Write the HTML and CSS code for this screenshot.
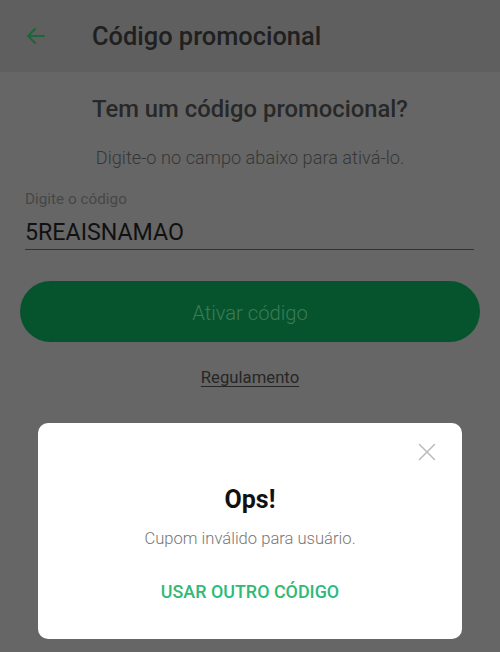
FILE: index.html
```html
<!DOCTYPE html>
<html lang="pt-BR">
<head>
<meta charset="utf-8">
<title>Código promocional</title>
<link rel="stylesheet" href="styles.css">
</head>
<body>
<div class="screen">
  <header class="topbar">
    <button class="back" aria-label="Voltar">
      <svg width="24" height="24" viewBox="0 0 24 24"><path d="M20 12H4.5M11 5l-7 7 7 7" fill="none" stroke="#1b673a" stroke-width="2" stroke-linecap="round" stroke-linejoin="round"/></svg>
    </button>
    <h1 class="title">Código promocional</h1>
  </header>
  <main class="content">
    <h2 class="heading">Tem um código promocional?</h2>
    <p class="sub">Digite-o no campo abaixo para ativá-lo.</p>
    <div class="field">
      <label class="label">Digite o código</label>
      <div class="value">5REAISNAMAO</div>
    </div>
    <button class="cta">Ativar código</button>
    <a class="rules">Regulamento</a>
  </main>
  <div class="modal">
    <button class="close" aria-label="Fechar">
      <svg width="18" height="18" viewBox="0 0 18 18"><path d="M1.5 1.5l15 15M16.5 1.5l-15 15" stroke="#bdbdbd" stroke-width="1.6" stroke-linecap="round"/></svg>
    </button>
    <h3 class="ops">Ops!</h3>
    <p class="msg">Cupom inválido para usuário.</p>
    <a class="again">USAR OUTRO CÓDIGO</a>
  </div>
</div>
</body>
</html>
```
FILE: styles.css
```css
* { box-sizing: border-box; margin: 0; padding: 0; }
html, body { width: 500px; height: 652px; overflow: hidden; }
body { background: #666666; font-family: Roboto, "Noto Sans", sans-serif; }
.screen { position: relative; width: 500px; height: 652px; }
.topbar {
  height: 72px; background: #5f5f5f;
  display: flex; align-items: center; padding-left: 24px;
}
.back { background: none; border: 0; width: 24px; height: 24px; display: flex; margin-top: -1px; }
.title { margin-left: 44px; font-size: 25.4px; font-weight: 500; color: #202020; margin-top: -1px; }
.content { display: flex; flex-direction: column; align-items: center; padding: 0 20px; }
.heading { margin-top: 22px; font-size: 23.8px; line-height: 30px; font-weight: 500; color: #282828; }
.sub { margin-top: 22px; font-size: 18.2px; line-height: 24px; font-weight: 300; color: #363636; }
.field { align-self: stretch; margin: 20px 6px 0 5px; border-bottom: 1.5px solid #333333; padding-bottom: 2px; }
.label { display: block; font-size: 15.3px; line-height: 18px; color: #464646; }
.value { margin-top: 9px; font-size: 23.2px; line-height: 30px; color: #111111; }
.cta {
  margin-top: 31px; align-self: stretch; height: 61px; border: 0; border-radius: 31px;
  background: #06542d; color: #3d7b55; font-family: inherit; font-size: 20.2px; font-weight: 300;
  padding-top: 2px;
}
.rules { margin-top: 25px; font-size: 16.7px; line-height: 22px; color: #262626; text-decoration: underline; text-underline-offset: 3px; }
.modal {
  position: absolute; left: 38px; top: 423px; width: 424px; height: 216px;
  background: #ffffff; border-radius: 10px;
  display: flex; flex-direction: column; align-items: center; padding-top: 62px;
}
.close { position: absolute; top: 20px; right: 26px; background: none; border: 0; width: 18px; height: 18px; display: flex; }
.ops { font-size: 25px; line-height: 30px; font-weight: 700; color: #111111; }
.msg { margin-top: 13px; font-size: 16.6px; line-height: 22px; font-weight: 300; color: #777777; }
.again { margin-top: 30px; font-size: 17.9px; line-height: 24px; font-weight: 500; color: #30b978; }
```
